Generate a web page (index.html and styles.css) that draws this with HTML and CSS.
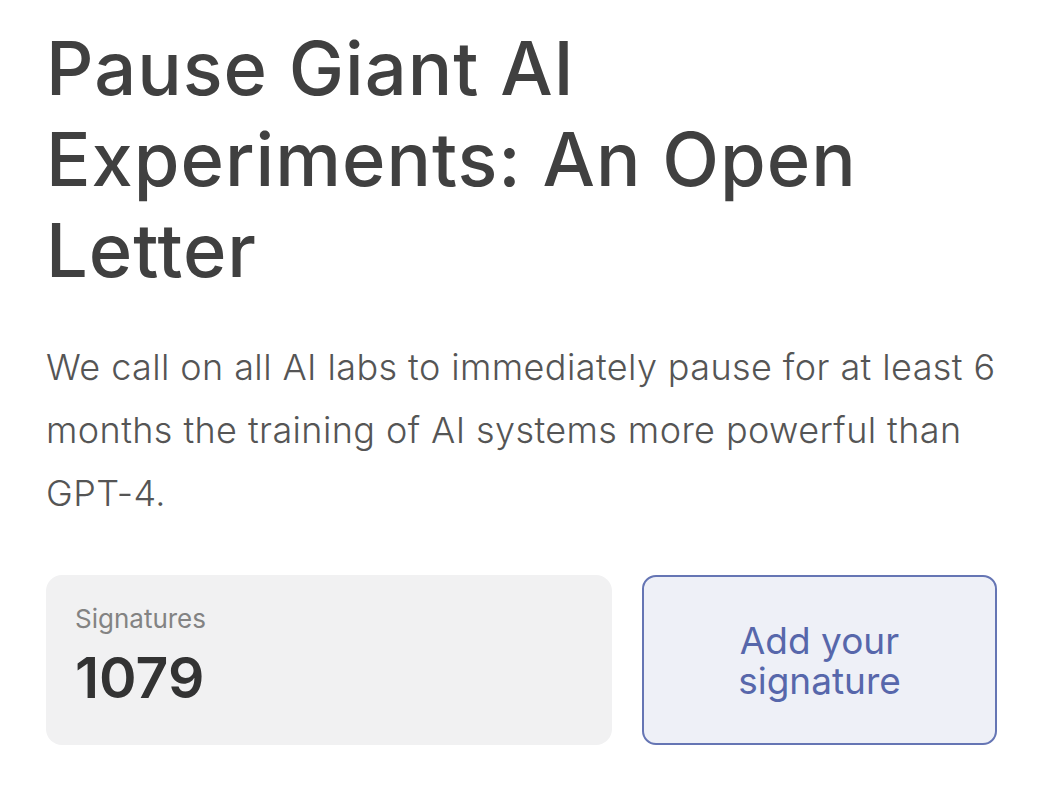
FILE: index.html
```html
<!DOCTYPE html>
<html lang="en">
<head>
    <meta charset="UTF-8">
    <meta name="viewport" content="width=device-width, initial-scale=1.0">
    <title>Pause Giant AI Experiments: An Open Letter</title>
    <link rel="stylesheet" href="styles.css">
</head>
<body>
    <div class="container">
        <h1>Pause Giant AI Experiments: An Open Letter</h1>

        <p class="lead">We call on all AI labs to immediately pause for at least 6 months the training of AI systems more powerful than GPT-4.</p>

        <div class="actions">
            <div class="counter">
                <span class="counter-label">Signatures</span>
                <span class="counter-value">1079</span>
            </div>
            <button class="sign-button">Add your signature</button>
        </div>
    </div>
</body>
</html>
```

FILE: styles.css
```css
body {
    font-family: Inter, 'Noto Sans', sans-serif;
    margin: 0;
    background-color: #ffffff;
    color: #3d3d3d;
}
.container {
    width: 951px;
    padding: 23px 0 0 46px;
}
h1 {
    margin: 0 0 40px;
    font-size: 74px;
    font-weight: 500;
    line-height: 91px;
    color: #404040;
    letter-spacing: 1px;
}
.lead {
    margin: 0 0 50px;
    font-size: 36px;
    font-weight: 300;
    line-height: 63px;
    color: #555555;
    letter-spacing: 0.4px;
}
.actions {
    display: flex;
    gap: 30px;
    height: 170px;
}
.counter {
    flex: 0 0 566px;
    box-sizing: border-box;
    background-color: #f1f1f2;
    border-radius: 16px;
    padding: 28px 29px;
    display: flex;
    flex-direction: column;
}
.counter-label {
    font-size: 26px;
    font-weight: 400;
    color: #838383;
}
.counter-value {
    margin-top: 12px;
    font-size: 57px;
    font-weight: 600;
    line-height: 64px;
    color: #333333;
}
.sign-button {
    flex: 1;
    background-color: #eef0f7;
    border: 2px solid #6575b4;
    border-radius: 14px;
    font-family: inherit;
    font-size: 37px;
    line-height: 40px;
    color: #5767ab;
    padding: 2px 60px 0;
    cursor: pointer;
}
```
